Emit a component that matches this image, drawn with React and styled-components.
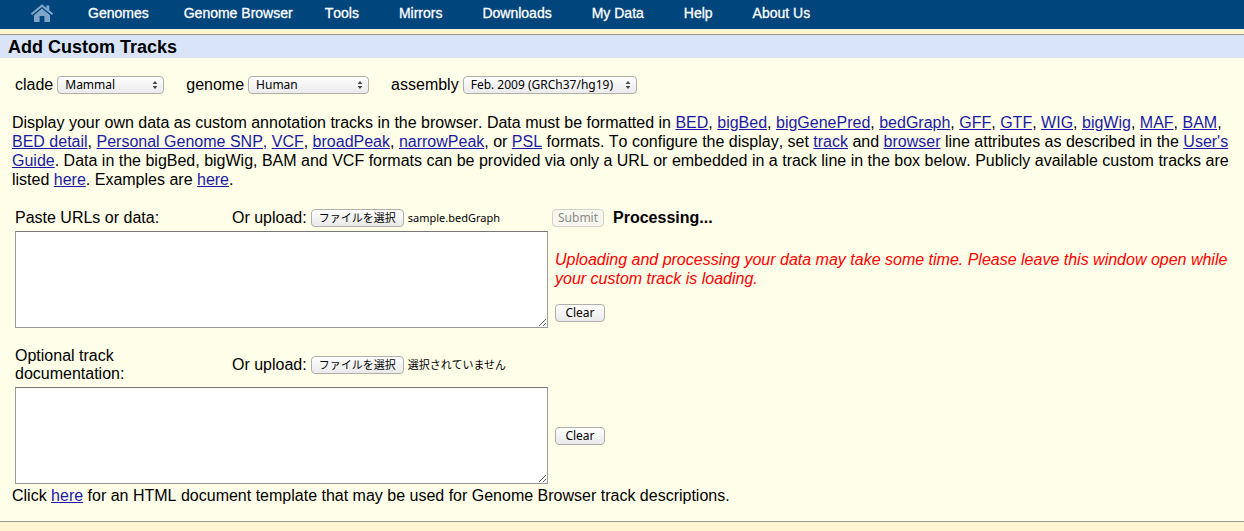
import React from 'react'
import styled, { createGlobalStyle } from 'styled-components'

const menus = [
  { label: 'Genomes', gap: 35 },
  { label: 'Genome Browser', gap: 32 },
  { label: 'Tools', gap: 40 },
  { label: 'Mirrors', gap: 40 },
  { label: 'Downloads', gap: 40 },
  { label: 'My Data', gap: 40 },
  { label: 'Help', gap: 40 },
  { label: 'About Us', gap: 40 }
]

const formats = ['BED', 'bigBed', 'bigGenePred', 'bedGraph', 'GFF', 'GTF', 'WIG', 'bigWig', 'MAF', 'BAM', 'BED detail']
const moreFormats = ['VCF', 'broadPeak', 'narrowPeak']

const selects = [
  { id: 'clade', value: 'Mammal', width: 107 },
  { id: 'genome', value: 'Human', width: 121 },
  { id: 'assembly', value: 'Feb. 2009 (GRCh37/hg19)', width: 174 }
]

const HomeIcon = () => (
  <svg width="24" height="20" viewBox="0 0 24 20" aria-hidden="true">
    <path fill="#7fa6c9" d="M12 1.2 0.8 10.6l1.3 1.5L12 3.9l9.9 8.2 1.3-1.5-3.9-3.3V2.4h-2.9v2.5z" />
    <path fill="#7fa6c9" d="M12 5.6 4 12.2V19h5.6v-6h4.8v6H20v-6.8z" />
  </svg>
)

const Arrows = () => (
  <svg width="6" height="8" viewBox="0 0 6 8" aria-hidden="true">
    <path fill="#444" d="M3 0l2.4 3H.6zM3 8L.6 5h4.8z" />
  </svg>
)

const SelectField = ({ id, value, width }) => (
  <Field>
    <label htmlFor={id}>{id}</label>
    <SelectBox $width={width}>
      <select id={id} defaultValue={value}>
        <option>{value}</option>
      </select>
      <Arrows />
    </SelectBox>
  </Field>
)

const Upload = ({ id, fileName }) => (
  <UploadRow>
    <label htmlFor={id}>Or upload:</label>
    <FileButton>
      ファイルを選択
      <input id={id} type="file" />
    </FileButton>
    <FileName>{fileName}</FileName>
  </UploadRow>
)

const FormatLinks = ({ items }) => items.map(item => (
  <React.Fragment key={item}>
    <a href="#format">{item}</a>,{' '}
  </React.Fragment>
))

const App = () => (
  <>
    <GlobalStyle />
    <Nav>
      <a href="#home" aria-label="Home"><HomeIcon /></a>
      <ul>
        {menus.map(({ label, gap }) => (
          <MenuItem key={label} $gap={gap}>
            <a href="#menu">{label}</a>
          </MenuItem>
        ))}
      </ul>
    </Nav>
    <Panel>
      <Title>Add Custom Tracks</Title>
      <Selectors>
        {selects.map(props => <SelectField key={props.id} {...props} />)}
      </Selectors>
      <Intro>
        Display your own data as custom annotation tracks in the browser.
        Data must be formatted in <FormatLinks items={formats} />
        <a href="#format">Personal Genome SNP,</a> <FormatLinks items={moreFormats} />
        or <a href="#format">PSL</a> formats.
        To configure the display, set <a href="#track">track</a> and <a href="#browser">browser</a> line
        attributes as described in the <a href="#guide">User's Guide</a>.
        Data in the bigBed, bigWig, BAM and VCF formats can be provided via only a URL or
        embedded in a track line in the box below.
        Publicly available custom tracks are listed <a href="#public">here</a>.
        Examples are <a href="#examples">here</a>.
      </Intro>
      <Form onSubmit={e => e.preventDefault()}>
        <Section>
          <FieldHead>
            <label htmlFor="data">Paste URLs or data:</label>
            <Upload id="dataFile" fileName="sample.bedGraph" />
          </FieldHead>
          <SubmitRow>
            <Button type="submit" disabled>Submit</Button>
            <b>Processing...</b>
          </SubmitRow>
          <TextArea id="data" />
          <Side>
            <Warning>
              Uploading and processing your data may take some time. Please leave this window
              open while your custom track is loading.
            </Warning>
            <Button type="button">Clear</Button>
          </Side>
        </Section>
        <Section>
          <FieldHead>
            <label htmlFor="docs">Optional track documentation:</label>
            <Upload id="docsFile" fileName="選択されていません" />
          </FieldHead>
          <span />
          <TextArea id="docs" />
          <Side>
            <Button type="button">Clear</Button>
          </Side>
        </Section>
      </Form>
      <Footnote>
        Click <a href="#template">here</a> for an HTML document template that may be used for
        Genome Browser track descriptions.
      </Footnote>
    </Panel>
  </>
)

const GlobalStyle = createGlobalStyle`
  * {
    box-sizing: border-box;
  }
  body {
    margin: 0;
    background: #fff5d0;
    color: #000;
    font: 16px/19px "Liberation Sans", Arial, sans-serif;
    font-kerning: none;
  }
`

const controlFont = '"Noto Sans", "Noto Sans CJK JP", sans-serif'

const Nav = styled.nav`
  display: flex;
  align-items: center;
  height: 29px;
  padding: 0 30px 3px;
  background: #00457c;
  ul {
    display: flex;
    list-style: none;
    margin: 0;
    padding: 0 0 0 34px;
  }
  svg {
    display: block;
  }
`

const MenuItem = styled.li`
  margin-right: ${({ $gap }) => $gap}px;
  font-size: 14px;
  white-space: nowrap;
  a {
    color: #fff;
    text-decoration: none;
    -webkit-text-stroke: 0.3px #fff;
  }
`

const Panel = styled.main`
  margin-top: 5px;
  border-top: 1px solid #999990;
  border-bottom: 1px solid #999990;
  background: #fffee8;
  a {
    color: #1a1aa6;
  }
`

const Title = styled.h1`
  margin: 0;
  padding: 2px 8px 1px;
  background: #d9e4f8;
  font-size: 18px;
  line-height: 20px;
  font-kerning: normal;
`

const Selectors = styled.div`
  display: flex;
  flex-wrap: wrap;
  gap: 22px;
  padding: 16px 15px 0;
`

const Field = styled.div`
  display: flex;
  align-items: center;
  gap: 4px;
`

const SelectBox = styled.div`
  display: grid;
  align-items: center;
  width: ${({ $width }) => $width}px;
  margin-top: 2px;
  select, svg {
    grid-area: 1 / 1;
  }
  svg {
    justify-self: end;
    margin-right: 6px;
    pointer-events: none;
  }
  select {
    appearance: none;
    width: 100%;
    height: 18px;
    margin: 0;
    padding: 0 16px 0 7px;
    border: 1px solid #b0b0a8;
    border-radius: 4px;
    background: linear-gradient(#fff, #f4f4f4 50%, #ebebeb);
    color: #000;
    font: 12px/16px ${controlFont};
  }
`

const Intro = styled.p`
  margin: 0;
  padding: 19px 12px 0;
`

const Form = styled.form`
  padding: 19px 15px 0;
`

const Section = styled.section`
  display: grid;
  grid-template-columns: 533px minmax(0, 1fr);
  column-gap: 7px;
  row-gap: 4px;
  & + & {
    margin-top: 19px;
  }
`

const FieldHead = styled.div`
  display: grid;
  grid-template-columns: 150px 1fr;
  column-gap: 67px;
  align-items: center;
  line-height: 18px;
`

const UploadRow = styled.div`
  display: flex;
  align-items: center;
  gap: 4px;
`

const buttonLook = `
  border: 1px solid #b0b0a8;
  border-radius: 4px;
  background: linear-gradient(#fff, #f4f4f4 50%, #e9e9e9);
  color: #000;
  text-align: center;
  font: 12px/16px ${controlFont};
`

const FileButton = styled.label`
  ${buttonLook}
  width: 93px;
  height: 18px;
  font-size: 11px;
  overflow: hidden;
  white-space: nowrap;
  input {
    display: none;
  }
`

const FileName = styled.span`
  font: 11px/18px ${controlFont};
`

const SubmitRow = styled.div`
  display: flex;
  align-items: center;
  gap: 9px;
  margin-left: -3px;
`

const Button = styled.button`
  ${buttonLook}
  height: 18px;
  min-width: 50px;
  padding: 0 5px;
  &:disabled {
    border-color: #d2d2c8;
    background: #f7f7f0;
    color: #8a8a86;
  }
`

const TextArea = styled.textarea`
  display: block;
  width: 100%;
  height: 97px;
  padding: 2px;
  border: 1px solid #999;
  border-top-color: #777;
  background: #fff;
  font: 12px/14px "Liberation Mono", monospace;
`

const Side = styled.div`
  display: flex;
  flex-direction: column;
  align-items: flex-start;
  justify-content: center;
  gap: 16px;
`

const Warning = styled.p`
  margin: 13px 0 0;
  color: #f00;
  font-style: italic;
`

const Footnote = styled.p`
  margin: 0;
  padding: 2px 12px 16px;
`

export default App
